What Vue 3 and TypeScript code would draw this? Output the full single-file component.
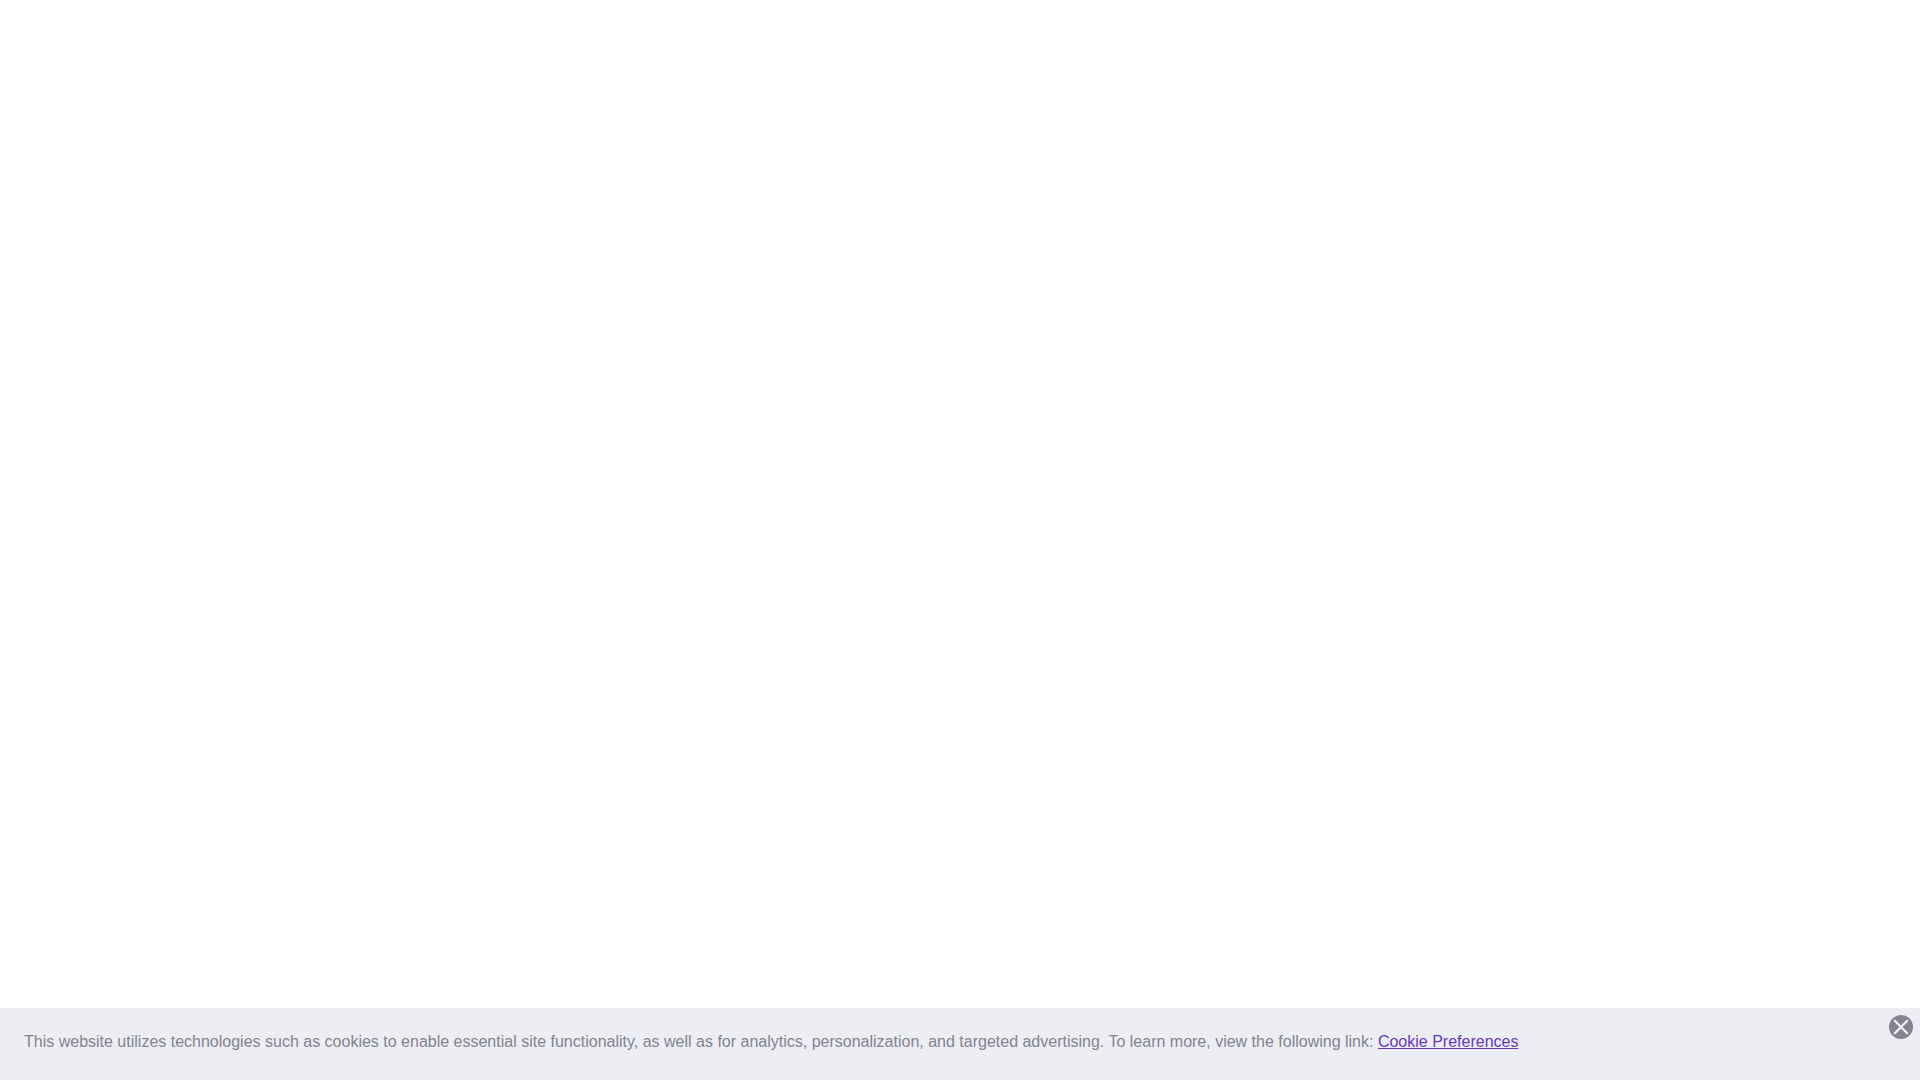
<script setup lang="ts">
import { ref } from 'vue'

const visible = ref<boolean>(true)
</script>

<template>
  <div class="page">
    <main class="content"></main>
    <section v-if="visible" class="banner" aria-label="Cookie notice">
      <p class="message">
        This website utilizes technologies such as cookies to enable essential site functionality, as well as for analytics, personalization, and targeted advertising. To learn more, view the following link:
        <a class="link" href="#cookie-preferences">Cookie Preferences</a>
      </p>
      <button class="close" type="button" aria-label="Close" @click="visible = false">
        <svg viewBox="0 0 24 24" width="24" height="24" aria-hidden="true">
          <circle cx="12" cy="12" r="12" fill="#838391" />
          <path d="M5.8 5.8 18.2 18.2M18.2 5.8 5.8 18.2" stroke="#f4f4f8" stroke-width="2.2" stroke-linecap="round" fill="none" />
        </svg>
      </button>
    </section>
  </div>
</template>

<style>
body {
  margin: 0;
  background: #ffffff;
}
</style>

<style scoped>
.page {
  display: flex;
  flex-direction: column;
  min-height: 100vh;
  font-family: "Liberation Sans", Arial, sans-serif;
}

.content {
  flex: 1;
}

.banner {
  display: flex;
  align-items: flex-start;
  justify-content: space-between;
  background: #edeef4;
}

.message {
  margin: 0;
  padding: 24px 24px 28px;
  font-size: 16px;
  line-height: 20px;
  color: #838391;
}

.link {
  color: #663bb7;
  text-decoration: underline;
}

.close {
  display: block;
  flex: none;
  margin: 7px;
  padding: 0;
  border: 0;
  background: none;
  cursor: pointer;
}

.close svg {
  display: block;
}
</style>
